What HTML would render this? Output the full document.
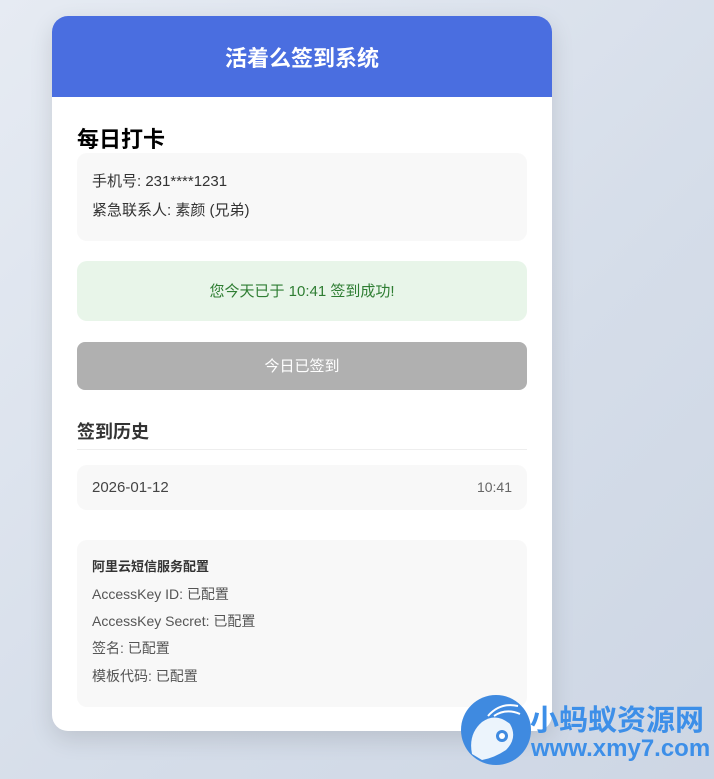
<!DOCTYPE html>
<html><head><meta charset="utf-8"><style>
*{margin:0;padding:0;box-sizing:border-box}
body{width:714px;height:779px;overflow:hidden;background:linear-gradient(135deg,#e6ebf3 0%,#d5dde9 60%,#cdd6e4 100%);font-family:"Liberation Sans","Noto Sans CJK SC",sans-serif;position:relative}
.card{position:absolute;left:52px;top:16px;width:500px;height:715px;background:#fff;border-radius:16px;overflow:hidden;box-shadow:0 8px 24px rgba(0,0,0,.12)}
.hd{height:81px;background:#4a6ee0;color:#fff;font-size:22px;font-weight:bold;text-align:center;line-height:85px}
.a{position:absolute}
.box{position:absolute;left:25px;width:450px;background:#f8f8f8;border-radius:10px}
.t{position:absolute;white-space:nowrap}
</style></head><body>
<div class="card">
<div class="hd">活着么签到系统</div>
<div class="t" style="left:25px;top:106px;font-size:22px;font-weight:bold;color:#000">每日打卡</div>
<div class="box" style="top:137px;height:88px">
<div class="t" style="left:15px;top:17px;font-size:15px;color:#333">手机号: 231****1231</div>
<div class="t" style="left:15px;top:46px;font-size:15px;color:#333">紧急联系人: 素颜 (兄弟)</div>
</div>
<div class="box" style="top:245px;height:60px;background:#e8f5e9;text-align:center;line-height:62px;font-size:15px;color:#2e7d32">您今天已于 10:41 签到成功!</div>
<div class="box" style="top:326px;height:48px;background:#b0b0b0;border-radius:8px;text-align:center;line-height:50px;font-size:15px;color:#fff">今日已签到</div>
<div class="t" style="left:25px;top:402px;font-size:18px;font-weight:bold;color:#333">签到历史</div>
<div class="a" style="left:25px;top:433px;width:450px;height:1px;background:#eee"></div>
<div class="box" style="top:449px;height:45px">
<div class="t" style="left:15px;top:14px;font-size:15px;color:#444">2026-01-12</div>
<div class="t" style="right:15px;top:14px;font-size:14px;color:#666">10:41</div>
</div>
<div class="box" style="top:524px;height:167px">
<div class="t" style="left:15px;top:16px;font-size:13px;font-weight:bold;color:#333">阿里云短信服务配置</div>
<div class="t" style="left:15px;top:44px;font-size:14px;color:#555">AccessKey ID: 已配置</div>
<div class="t" style="left:15px;top:71px;font-size:14px;color:#555">AccessKey Secret: 已配置</div>
<div class="t" style="left:15px;top:98px;font-size:14px;color:#555">签名: 已配置</div>
<div class="t" style="left:15px;top:126px;font-size:14px;color:#555">模板代码: 已配置</div>
</div>
</div>
<svg class="a" style="left:460px;top:694px" width="72" height="72" viewBox="0 0 72 72">
<circle cx="36" cy="36" r="35" fill="#3f8ae0"/>
<path d="M12 60 Q8 40 22 28 Q36 18 50 30 Q58 44 46 56 Q34 64 22 66Z" fill="#fff" opacity=".9"/>
<circle cx="42" cy="42" r="6" fill="#3f8ae0"/><circle cx="42" cy="42" r="3" fill="#fff"/>
<path d="M28 22 Q40 8 58 12 M34 22 Q46 14 60 20" stroke="#fff" stroke-width="2" fill="none"/>
</svg>
<div class="t" style="left:530px;top:697px;font-size:29px;font-weight:bold;color:#3d8fe8">小蚂蚁资源网</div>
<div class="t" style="left:531px;top:735px;font-size:24px;font-weight:bold;color:#3d8fe8">www.xmy7.com</div>
</body></html>
